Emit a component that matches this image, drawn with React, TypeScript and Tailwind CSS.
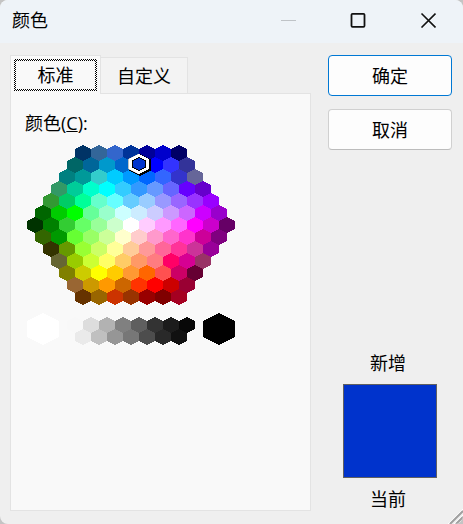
import React, { useState } from 'react';

const colorRows = [
  ['#003366', '#336699', '#3366cc', '#003399', '#000099', '#0000cc', '#000066'],
  ['#006666', '#006699', '#0099cc', '#0066cc', '#0033cc', '#0000ff', '#3333ff', '#333399'],
  ['#008080', '#009999', '#33cccc', '#00ccff', '#0099ff', '#0066ff', '#3366ff', '#3333cc', '#666699'],
  ['#339966', '#00cc99', '#00ffcc', '#00ffff', '#33ccff', '#3399ff', '#6699ff', '#6666ff', '#6600ff', '#6600cc'],
  ['#339933', '#00cc66', '#00ff99', '#66ffcc', '#66ffff', '#66ccff', '#99ccff', '#9999ff', '#9966ff', '#9933ff', '#9900ff'],
  ['#006600', '#00cc00', '#00ff00', '#66ff99', '#99ffcc', '#ccffff', '#ccecff', '#ccccff', '#cc99ff', '#cc66ff', '#cc00ff', '#9900cc'],
  ['#003300', '#008000', '#33cc33', '#66ff66', '#99ff99', '#ccffcc', '#ffffff', '#ffccff', '#ff99ff', '#ff66ff', '#ff00ff', '#cc00cc', '#660066'],
  ['#336600', '#009900', '#66ff33', '#99ff66', '#ccff99', '#ffffcc', '#ffcccc', '#ff99cc', '#ff66cc', '#ff33cc', '#cc0099', '#800080'],
  ['#333300', '#669900', '#99ff33', '#ccff66', '#ffff99', '#ffcc99', '#ff9999', '#ff6699', '#ff3399', '#cc3399', '#990099'],
  ['#666633', '#99cc00', '#ccff33', '#ffff66', '#ffcc66', '#ff9966', '#ff7c80', '#ff0066', '#d60093', '#993366'],
  ['#808000', '#cccc00', '#ffff00', '#ffcc00', '#ff9933', '#ff6600', '#ff5050', '#cc0066', '#660033'],
  ['#996633', '#cc9900', '#ff9900', '#cc6600', '#ff3300', '#ff0000', '#cc0000', '#990033'],
  ['#663300', '#996600', '#cc3300', '#993300', '#990000', '#800000', '#a50021'],
];

const grayRows = [
  ['#f8f8f8', '#dddddd', '#b2b2b2', '#808080', '#5f5f5f', '#333333', '#1c1c1c', '#080808'],
  ['#eaeaea', '#c0c0c0', '#969696', '#777777', '#4d4d4d', '#292929', '#111111'],
];

interface Cell {
  x: number;
  y: number;
  r: number;
  color: string;
}

const cells: Cell[] = [
  ...colorRows.flatMap((row, i) =>
    row.map((color, j) => ({ x: 104 - row.length * 8 + j * 16 + 8, y: 8 + i * 12, r: 8, color }))
  ),
  ...grayRows.flatMap((row, i) =>
    row.map((color, j) => ({ x: 48 + i * 8 + j * 16, y: 180 + i * 12, r: 8, color }))
  ),
  { x: 16, y: 184, r: 16, color: '#ffffff' },
  { x: 192, y: 184, r: 16, color: '#000000' },
];

// Pointy-top hexagon, as wide as it is high
const hexPoints = (x: number, y: number, r: number) =>
  [[0, -r], [r, -r / 2], [r, r / 2], [0, r], [-r, r / 2], [-r, -r / 2]]
    .map(([dx, dy]) => `${x + dx},${y + dy}`)
    .join(' ');

const App: React.FC = () => {
  const [selected, setSelected] = useState(11);
  const current = cells[selected];

  return (
    <div className="bg-[#c4c4c4]">
      <main className="relative flex flex-col min-h-screen overflow-hidden rounded-lg bg-[#efefef] font-['Open_Sans','Noto_Sans_CJK_SC',sans-serif] text-lg leading-6 text-black">
        <header className="flex items-center justify-between h-[43px] pl-3 bg-[#eef3f8]">
          <h1 className="pb-1">颜色</h1>
          <div className="flex h-full">
            <button aria-label="最小化" disabled className="flex items-center justify-center w-[70px] pb-1">
              <svg width="16" height="16" viewBox="0 0 16 16" fill="none" stroke="#bfc3c7">
                <path d="M1 8.5h15" />
              </svg>
            </button>
            <button aria-label="最大化" className="flex items-center justify-center w-[70px] pb-1">
              <svg width="16" height="16" viewBox="0 0 16 16" fill="none" stroke="#111" strokeWidth="1.8">
                <rect x="1.5" y="1.8" width="13" height="13" rx="1" />
              </svg>
            </button>
            <button aria-label="关闭" className="flex items-center justify-center w-[70px] pb-1">
              <svg width="16" height="16" viewBox="0 0 16 16" fill="none" stroke="#111" strokeWidth="1.6">
                <path d="M1.5 1.5l14 14M15.5 1.5l-14 14" />
              </svg>
            </button>
          </div>
        </header>

        <div className="flex flex-1 gap-[17px] pt-3 pr-[11px] pb-[13px] pl-[10px]">
          <section className="flex flex-col flex-1">
            <div role="tablist" className="flex items-end">
              <button role="tab" aria-selected="true" className="relative z-10 w-[91px] h-[39px] -mb-px p-[3px] bg-[#f9f9f9] border border-b-0 border-[#e3e3e3]">
                {/* checkered focus rectangle */}
                <span className="flex h-full p-[2px] bg-[repeating-conic-gradient(#000_0_25%,#fff_0_50%)] bg-[length:2px_2px]">
                  <span className="flex flex-1 items-center justify-center bg-[#f9f9f9]">标准</span>
                </span>
              </button>
              <button role="tab" aria-selected="false" className="w-[87px] h-[36px] bg-[#f3f3f3] border border-b-0 border-l-0 border-[#e3e3e3]">自定义</button>
            </div>
            <div role="tabpanel" className="flex-1 pt-[17px] pl-[14px] bg-[#f9f9f9] border border-[#e3e3e3]">
              <p id="palette-label">颜色(<u>C</u>):</p>
              <svg role="group" aria-labelledby="palette-label" width="210" height="202" viewBox="0 0 210 202" className="mt-[10px] ml-[2px]" shapeRendering="crispEdges">
                {cells.map((cell, i) => (
                  <polygon key={i} points={hexPoints(cell.x, cell.y, cell.r)} fill={cell.color} onClick={() => setSelected(i)} />
                ))}
                <polygon points={hexPoints(current.x + 1, current.y, 11)} fill="#000" />
                <polygon points={hexPoints(current.x - 1, current.y - 1, 10)} fill="#c0c0c0" />
                <polygon points={hexPoints(current.x, current.y - 1, 10)} fill="#fff" />
                <polygon points={hexPoints(current.x, current.y - 1, 7)} fill="#000" />
                <polygon points={hexPoints(current.x, current.y - 1, 6)} fill={current.color} />
              </svg>
            </div>
          </section>

          <aside className="flex flex-col justify-between w-[124px]">
            <div className="flex flex-col gap-[13px]">
              <button className="h-[41px] bg-[#fdfdfd] border border-[#0078d4] rounded">确定</button>
              <button className="h-[41px] bg-[#fdfdfd] border border-[#d0d0d0] border-b-[#bcbcbc] rounded">取消</button>
            </div>
            <div className="flex flex-col items-center gap-[9px]">
              <span className="pr-1">新增</span>
              <div className="w-[94px] h-[94px] border border-[#606060]" style={{ backgroundColor: current.color }} />
              <span className="pr-1">当前</span>
            </div>
          </aside>
        </div>

        <svg className="absolute right-0 bottom-0" width="15" height="15" viewBox="0 0 15 15" fill="none">
          <path d="M0 15L15 0M6 15L15 6" stroke="#fff" />
          <path d="M2 15L15 2M8 15L15 8" stroke="#a0a0a0" strokeWidth="2" />
        </svg>
      </main>
    </div>
  );
};

export default App;
